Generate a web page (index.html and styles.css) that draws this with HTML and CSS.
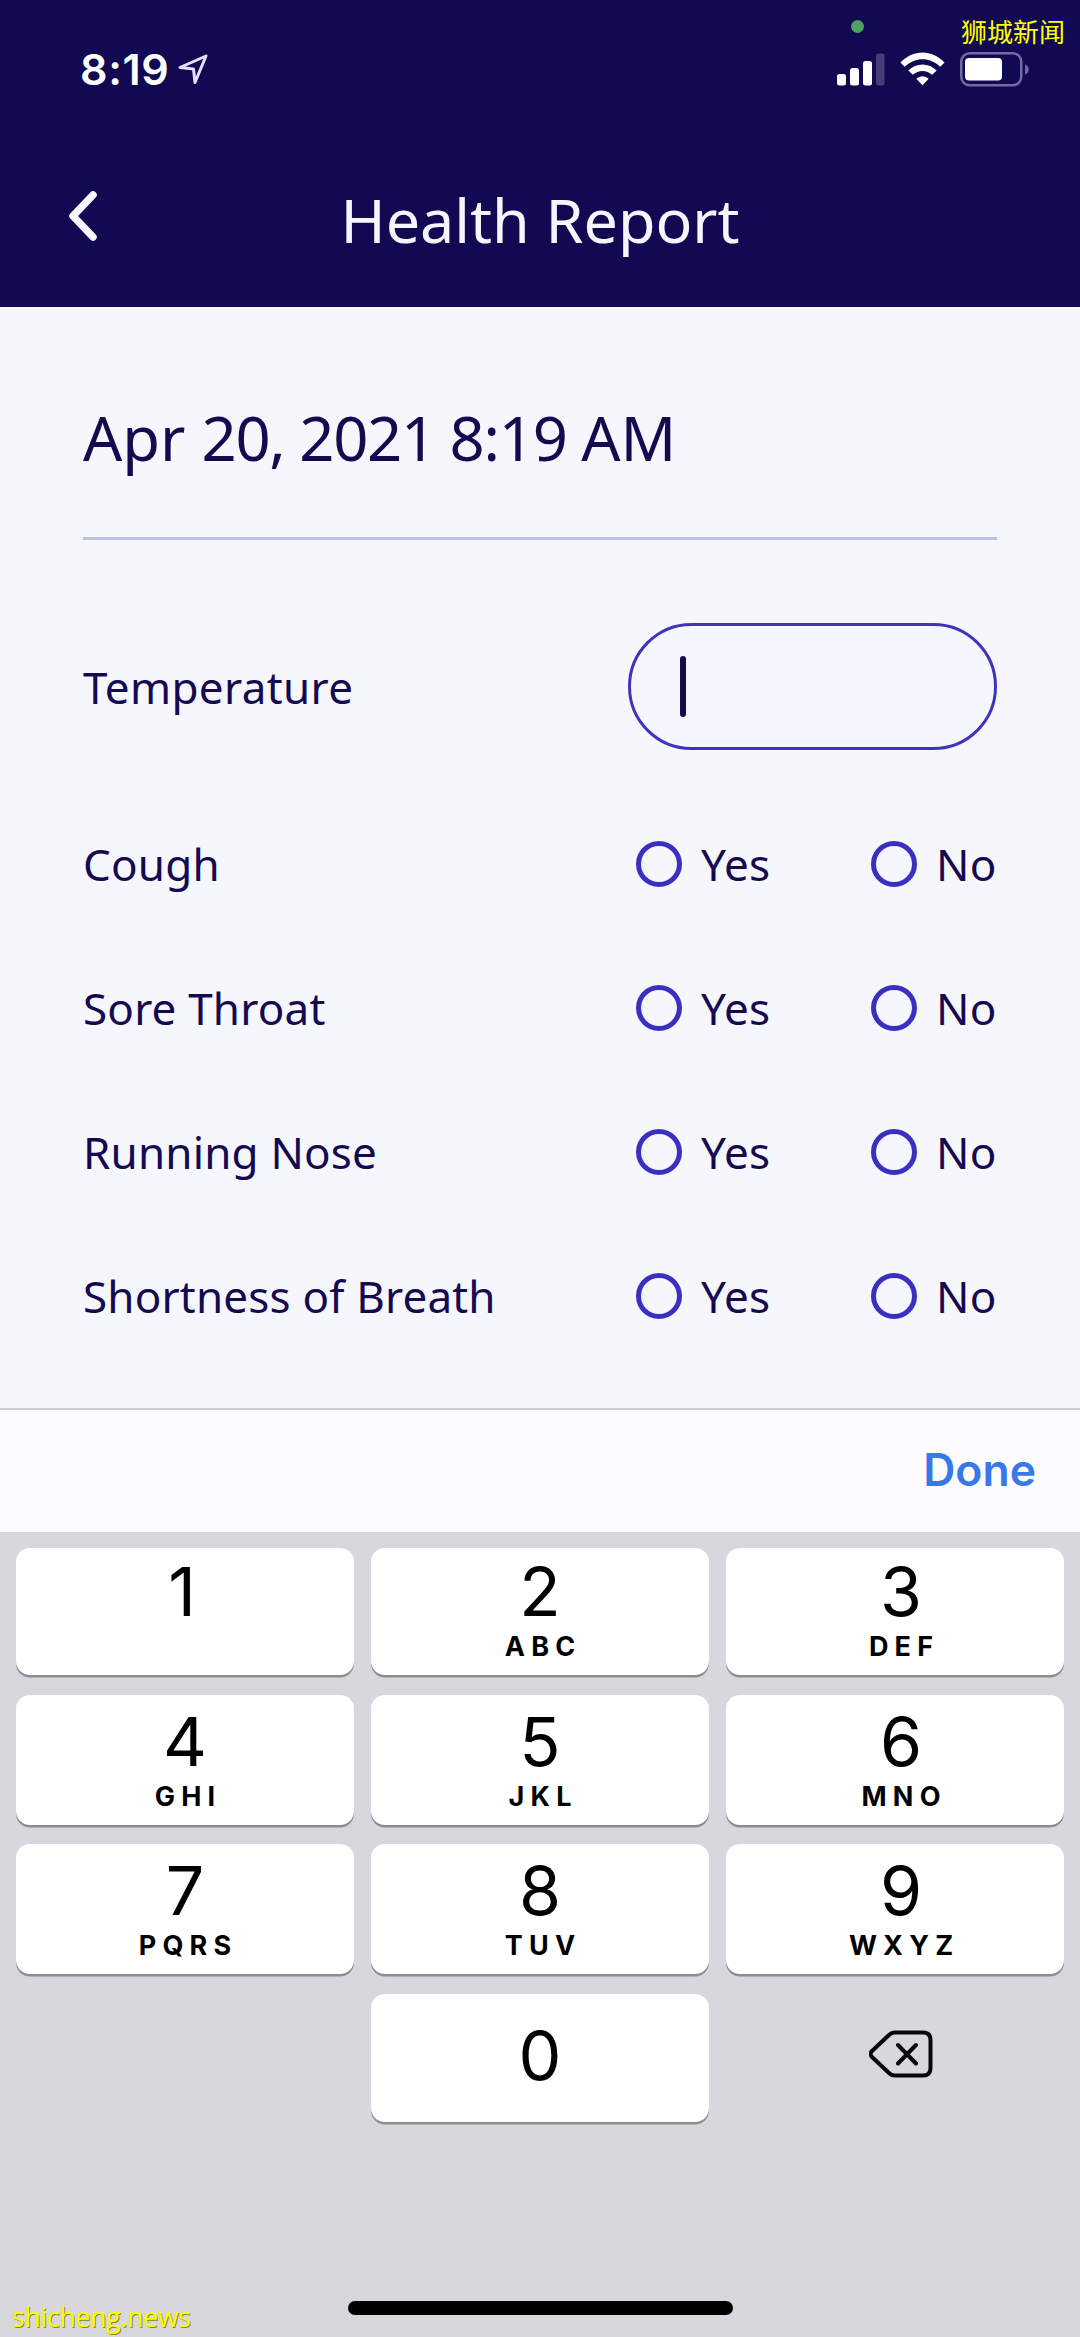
FILE: index.html
```html
<!DOCTYPE html>
<html lang="en">
<head>
<meta charset="utf-8">
<title>Health Report</title>
<link rel="stylesheet" href="styles.css">
</head>
<body>
<div class="screen">
  <header class="header">
    <div class="status">
      <span class="time">8:19</span>
      <svg class="location" width="32" height="32" viewBox="0 0 32 32"><path d="M29 3 3 14.500 16.500 16 18 29.500Z"/></svg>
      <svg class="signal" width="48" height="33" viewBox="0 0 48 33">
        <rect x="0" y="21" width="9" height="11.500" rx="2.500"/><rect x="13" y="15" width="9" height="17.500" rx="2.500"/><rect x="26" y="8" width="9" height="24.500" rx="2.500"/><rect class="off" x="39" y="0.500" width="8.500" height="32" rx="2.500"/>
      </svg>
      <svg class="wifi" width="45" height="34" viewBox="0 0 45 34">
        <path d="M0.400 10.600C13-2.900 32-2.900 44.600 10.600L40.200 14.800C30 4.800 15 4.800 4.800 14.800Z"/>
        <path d="M8.300 18.600C16 10.600 29 10.600 36.700 18.600L32.200 22.800C26.500 17.600 18.500 17.600 12.800 22.800Z"/>
        <path d="M16.300 26.800C20 23.300 25 23.300 28.700 26.800L22.500 33.300Z"/>
      </svg>
      <svg class="battery" width="70" height="35" viewBox="0 0 70 35">
        <rect class="shell" x="1.250" y="1.250" width="60" height="32" rx="8.500"/>
        <rect class="charge" x="5" y="6" width="37" height="22.500" rx="4"/>
        <path class="nub" d="M65 12.500C70 14 70 21 65 22.500Z"/>
      </svg>
      <span class="dot"></span>
    </div>
    <div class="nav">
      <svg class="back" width="32" height="52" viewBox="0 0 32 52"><path d="M25 5 5 26 25 47"/></svg>
      <h1 class="title">Health Report</h1>
    </div>
  </header>

  <main class="report">
    <div class="date">Apr&nbsp;<span class="digits">20, 2021 8:19 </span>AM</div>
    <div class="temperature">
      <span class="label l-temp">Temperature</span>
      <div class="field"><span class="caret"></span></div>
    </div>
    <div class="questions">
      <div class="question"><span class="label">Cough</span><span class="option"><i class="radio"></i>Yes</span><span class="option"><i class="radio"></i>No</span></div>
      <div class="question"><span class="label">Sore Throat</span><span class="option"><i class="radio"></i>Yes</span><span class="option"><i class="radio"></i>No</span></div>
      <div class="question"><span class="label">Running Nose</span><span class="option"><i class="radio"></i>Yes</span><span class="option"><i class="radio"></i>No</span></div>
      <div class="question"><span class="label">Shortness of Breath</span><span class="option"><i class="radio"></i>Yes</span><span class="option"><i class="radio"></i>No</span></div>
    </div>
  </main>

  <div class="toolbar"><span class="done">Done</span></div>

  <div class="keyboard">
    <div class="keys">
      <div class="key first one"><b>1</b></div>
      <div class="key first"><b>2</b><small>ABC</small></div>
      <div class="key first right"><b>3</b><small>DEF</small></div>
      <div class="key"><b>4</b><small>GHI</small></div>
      <div class="key"><b>5</b><small>JKL</small></div>
      <div class="key right"><b>6</b><small>MNO</small></div>
      <div class="key"><b>7</b><small>PQRS</small></div>
      <div class="key"><b>8</b><small>TUV</small></div>
      <div class="key right"><b>9</b><small>WXYZ</small></div>
      <div class="key zero"><b>0</b></div>
      <div class="erase">
        <svg width="64" height="48" viewBox="0 0 64 48"><path d="M25.500 2.500H54Q61.500 2.500 61.500 10V38Q61.500 45.500 54 45.500H25.500Q22.500 45.500 20 43L3 27Q0 24 3 21L20 5Q22.500 2.500 25.500 2.500ZM29 15 47 33.500M47 15 29 33.500"/></svg>
      </div>
    </div>
    <div class="home"></div>
  </div>

  <span class="mark mark-top">狮城新闻</span>
  <span class="mark mark-bottom">shicheng.news</span>
</div>
</body>
</html>
```
FILE: styles.css
```css
* { box-sizing: border-box; }
body { margin: 0; }

.screen {
  position: relative;
  width: 1080px;
  height: 2337px;
  overflow: hidden;
  display: flex;
  flex-direction: column;
  background: #f6f6fd;
  color: #150a50;
  font-family: "Noto Sans", sans-serif;
}

/* Header */
.header { height: 307px; background: #110a52; color: #f5f5fe; }
.status {
  position: relative;
  display: flex;
  align-items: center;
  height: 138px;
  padding: 0 50px 0 80px;
}
.time { font: 600 43px/1 Inter, sans-serif; color: #fff; letter-spacing: 0.600px; width: 97px; white-space: nowrap; }
.location { fill: none; stroke: #e2e0fa; stroke-width: 3; stroke-linejoin: round; }
.signal { margin-left: auto; fill: #fff; }
.signal .off { fill: #453e79; }
.wifi { margin-left: 15px; fill: #fff; }
.battery { margin-left: 15px; }
.shell { fill: none; stroke: #6f6a9f; stroke-width: 2.500; }
.charge { fill: #fff; }
.nub { fill: #6f6a9f; }
.dot {
  position: absolute;
  left: 851px;
  top: 20px;
  width: 13px;
  height: 13px;
  border-radius: 50%;
  background: #4da25d;
}
.nav {
  display: grid;
  grid-template-columns: 100px 1fr 100px;
  align-items: center;
  height: 163px;
}
.back {
  justify-self: end;
  margin-bottom: 8px;
  fill: none;
  stroke: #f8f8ff;
  stroke-width: 7.500;
  stroke-linecap: round;
  stroke-linejoin: round;
}
.title { margin: 0; text-align: center; font-size: 61px; font-weight: 400; line-height: 80px; }

/* Form */
.report { height: 1101px; padding: 30px 83px 0; }
.date {
  display: flex;
  align-items: center;
  height: 203px;
  padding-bottom: 1px;
  border-bottom: 3px solid #b9c3ea;
  font-size: 61.500px;
  white-space: pre;
}
.digits { letter-spacing: -1.270px; }
.temperature { display: flex; align-items: center; justify-content: space-between; margin-top: 83px; }
.label { font-size: 44px; letter-spacing: 0.180px; white-space: nowrap; }
.l-temp { letter-spacing: 0.360px; }
.field {
  display: flex;
  align-items: center;
  width: 369px;
  height: 127px;
  padding-left: 49px;
  border: 3px solid #4133bb;
  border-radius: 64px;
  background: #f4f7fe;
}
.caret { width: 6px; height: 61px; border-radius: 3px; background: #150a50; }
.questions { margin-top: 42px; }
.question { display: grid; grid-template-columns: 553px 235px auto; align-items: center; height: 144px; }
.option { display: flex; align-items: center; gap: 19px; font-size: 44px; letter-spacing: 0.200px; }
.radio { width: 46px; height: 46px; border: 5px solid #3a2fc0; border-radius: 50%; }

/* Keyboard */
.toolbar {
  display: flex;
  align-items: center;
  justify-content: flex-end;
  height: 124px;
  padding: 0 44px 1px 0;
  border-top: 2px solid #cbcbd1;
  background: #fcfcfe;
}
.done { font: 600 44.500px/1 Inter, sans-serif; color: #3878ea; }
.keyboard {
  display: flex;
  flex-direction: column;
  align-items: center;
  justify-content: space-between;
  height: 805px;
  padding: 16px 16px 22px;
  background: #d8d7de;
  color: #000;
}
.keys {
  display: grid;
  grid-template-columns: repeat(3, 338px);
  grid-template-rows: 127px 130px 130px 128px;
  gap: 19.500px 17px;
}
.key {
  display: flex;
  flex-direction: column;
  align-items: center;
  padding-top: 5px;
  border-radius: 14px;
  background: #fff;
  box-shadow: 0 2.500px 0 #8c8c91;
  font-family: Inter, sans-serif;
}
.key.first { padding-top: 2px; }
.key.one { padding-right: 6px; }
.key.right { padding-left: 12px; }
.key b { font-size: 68px; font-weight: 400; line-height: 82px; }
.key small { font-size: 27px; font-weight: 700; line-height: 30px; letter-spacing: 6.200px; margin-right: -6.200px; }
.zero { grid-column: 2; padding-top: 20px; }
.erase { display: flex; align-items: center; justify-content: center; padding: 0 0 7px 12px; }
.erase svg { fill: none; stroke: #08080c; stroke-width: 4; stroke-linecap: round; stroke-linejoin: round; }
.home { width: 385px; height: 14px; border-radius: 7px; background: #000; }

/* Watermarks */
.mark { position: absolute; color: #ff0; white-space: nowrap; line-height: 1; }
.mark-top { top: 18px; right: 15px; font-family: "Noto Sans CJK SC", sans-serif; font-size: 26px; }
.mark-bottom {
  left: 12px;
  bottom: 7px;
  font-family: "Open Sans", sans-serif;
  font-size: 26.500px;
  letter-spacing: -0.200px;
  text-shadow: 1px 1px 0 #85851e;
}
```
